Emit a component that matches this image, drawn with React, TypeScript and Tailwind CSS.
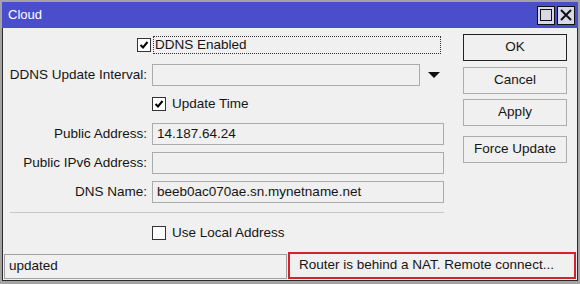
import React from "react";

const font = { fontFamily: '"Liberation Sans", Arial, sans-serif' };

function Check({ checked }: { checked: boolean }) {
  return (
    <div className="w-[14px] h-[14px] border border-[#333333] bg-white flex items-center justify-center shrink-0">
      {checked && (
        <svg width="10" height="10" viewBox="0 0 10 10">
          <path d="M1.5 5 L4 7.5 L8.5 2" stroke="#000" strokeWidth="2" fill="none" />
        </svg>
      )}
    </div>
  );
}

function Field({ label, value, w = "w-[292px]" }: { label: string; value?: string; w?: string }) {
  return (
    <div className="flex items-center h-[22px]">
      <div className="w-[145px] text-right pr-[1px] text-[13.5px] text-[#151515] whitespace-nowrap">{label}</div>
      <div className={`ml-[4px] ${w} h-[22px] border border-[#ababab] bg-[#f0f0f0] flex items-center px-[4px] text-[13.5px] text-[#151515]`}>
        {value}
      </div>
    </div>
  );
}

function Btn({ label, def }: { label: string; def?: boolean }) {
  return (
    <div
      className={`w-[104px] h-[27px] flex items-center justify-center text-[13.5px] text-[#151515] bg-[#f0f0f0] border ${
        def ? "border-[#222]" : "border-[#adadad]"
      }`}
    >
      {label}
    </div>
  );
}

export default function App() {
  return (
    <div className="w-[580px] h-[284px] bg-[#a3a3a3] pt-[2px] px-[2px] pb-[3px] flex flex-col" style={font}>
      <div className="h-[26px] bg-[#4b4ecb] flex items-center justify-between pl-[6px] pr-[3px] shrink-0">
        <span className="text-white text-[13px]">Cloud</span>
        <div className="flex gap-[2px]">
          <div className="w-[18px] h-[19px] border border-[#111] bg-[#d8d8e6] flex items-center justify-center">
            <div className="w-[12px] h-[12px] border border-[#111]" />
          </div>
          <div className="w-[18px] h-[19px] border border-[#111] bg-[#d8d8e6] flex items-center justify-center">
            <svg width="12" height="12" viewBox="0 0 12 12">
              <path d="M1 1 L11 11 M11 1 L1 11" stroke="#111" strokeWidth="2" />
            </svg>
          </div>
        </div>
      </div>
      <div className="flex-1 bg-[#f0f0f0] border-x border-b border-[#2a2a2a] flex flex-col">
        <div className="flex flex-1">
          <div className="w-[460px] pt-[8px] flex flex-col">
            <div className="flex h-[18px] items-center">
              <div className="w-[134px]" />
              <Check checked />
              <div className="ml-[2px] w-[288px] h-[18px] border border-dotted border-[#333] flex items-center pl-[1px] text-[13.5px] text-[#151515]">
                DDNS Enabled
              </div>
            </div>
            <div className="mt-[10px] flex items-center">
              <Field label="DDNS Update Interval:" w="w-[268px]" />
              <svg className="ml-[8px]" width="12" height="6" viewBox="0 0 12 6">
                <path d="M0 0 H12 L6 6 Z" fill="#111" />
              </svg>
            </div>
            <div className="mt-[9px] flex h-[18px] items-center">
              <div className="w-[149px]" />
              <Check checked />
              <span className="ml-[6px] text-[13.5px] text-[#151515]">Update Time</span>
            </div>
            <div className="mt-[10px] flex flex-col gap-[7px]">
              <Field label="Public Address:" value="14.187.64.24" />
              <Field label="Public IPv6 Address:" />
              <Field label="DNS Name:" value="beeb0ac070ae.sn.mynetname.net" />
            </div>
            <div className="mt-[9px] ml-[7px] w-[434px] h-[1px] bg-[#c8c8c8]" />
            <div className="mt-[12px] flex h-[16px] items-center">
              <div className="w-[149px]" />
              <Check checked={false} />
              <span className="ml-[6px] text-[13.5px] text-[#151515]">Use Local Address</span>
            </div>
          </div>
          <div className="pt-[6px] flex flex-col gap-[5px]">
            <Btn label="OK" def />
            <div className="mt-[1px]">
              <Btn label="Cancel" />
            </div>
            <Btn label="Apply" />
            <div className="mt-[5px]">
              <Btn label="Force Update" />
            </div>
          </div>
        </div>
        <div className="h-[28px] flex items-stretch pb-[1px] pl-[1px] pr-[1px]">
          <div className="w-[283px] border border-[#a0a0a0] flex items-center px-[4px] text-[13.5px] text-[#151515] mt-[2px]">
            updated
          </div>
          <div className="flex-1 ml-[1px] border-2 border-[#d6202c] flex items-center pl-[9px] text-[13.5px] text-[#151515]">
            Router is behind a NAT. Remote connect...
          </div>
        </div>
      </div>
    </div>
  );
}
